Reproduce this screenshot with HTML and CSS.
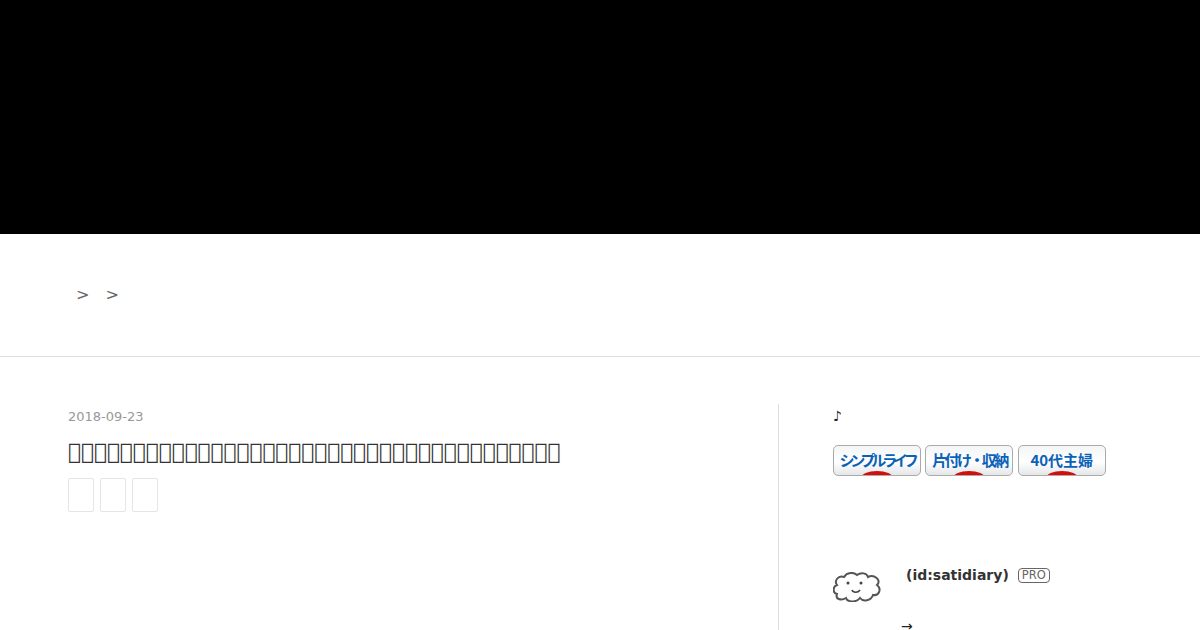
FILE: index.html
```html
<!DOCTYPE html>
<html lang="ja">
<head>
  <meta charset="UTF-8">
  <meta name="viewport" content="width=device-width, initial-scale=1.0">
  <title>2018-09-23</title>
  <link rel="stylesheet" href="styles.css">
</head>
<body>
  <header class="blog-header"></header>

  <nav class="breadcrumb">
    <span class="crumb-sep">&gt;</span>
    <span class="crumb-sep">&gt;</span>
  </nav>

  <div class="content">
    <main class="entry">
      <time class="entry-date">2018-09-23</time>
      <h1 class="entry-title">&#xE000;&#xE000;&#xE000;&#xE000;&#xE000;&#xE000;&#xE000;&#xE000;&#xE000;&#xE000;&#xE000;&#xE000;&#xE000;&#xE000;&#xE000;&#xE000;&#xE000;&#xE000;&#xE000;&#xE000;&#xE000;&#xE000;&#xE000;&#xE000;&#xE000;&#xE000;&#xE000;&#xE000;&#xE000;&#xE000;&#xE000;&#xE000;&#xE000;&#xE000;&#xE000;&#xE000;&#xE000;&#xE000;</h1>
      <div class="entry-tags">
        <a class="tag"></a>
        <a class="tag"></a>
        <a class="tag"></a>
      </div>
    </main>

    <aside class="sidebar">
      <p class="side-note">♪</p>
      <div class="banners">
        <a class="banner banner-simple">シンプルライフ</a>
        <a class="banner banner-storage">片付け・収納</a>
        <a class="banner banner-age">40代主婦</a>
      </div>
      <div class="profile">
        <svg class="avatar" width="48" height="30" viewBox="0 0 48 30">
          <path d="M4 13C1 9 5 3 11 5C14 0 21 0 24 3C28 0 34 1 35 5C41 2 49 8 44 13C49 17 46 24 40 23C38 29 30 30 27 26C23 31 14 30 13 26C8 29 2 27 4 22C-1 21 0 14 4 13Z" fill="#fff" stroke="#555" stroke-width="2"/>
          <circle cx="15" cy="11" r="1.5" fill="#444"/>
          <circle cx="28" cy="11" r="1.5" fill="#444"/>
          <path d="M19 18C20 21 25 21 27 18" fill="none" stroke="#444" stroke-width="1.6"/>
        </svg>
        <div class="profile-body">
          <div class="profile-name">
            <span class="profile-id">(id:satidiary)</span>
            <span class="pro-badge">PRO</span>
          </div>
          <p class="profile-link">→</p>
        </div>
      </div>
    </aside>
  </div>
</body>
</html>
```

FILE: styles.css
```css
html, body {
    height: 630px;
    overflow: hidden;
}
body {
    margin: 0;
    background-color: #fff;
    color: #333;
    font-family: "DejaVu Sans", sans-serif;
}
.blog-header {
    height: 234px;
    background-color: #000;
}
.breadcrumb {
    display: flex;
    gap: 16px;
    align-items: center;
    height: 122px;
    padding-left: 76px;
    border-bottom: 1px solid #ddd;
    color: #666;
    font-size: 16px;
    line-height: 20px;
}
.content {
    display: flex;
    padding: 47px 0 0 68px;
}
.entry {
    width: 710px;
    flex-shrink: 0;
}
.entry-date {
    display: block;
    color: #999;
    font-size: 13px;
    line-height: 20px;
    margin-top: 3px;
}
.entry-title {
    margin: 11px 0 0;
    color: #333;
    font-size: 21.6px;
    font-weight: normal;
    line-height: 28px;
    white-space: nowrap;
}
.entry-tags {
    display: flex;
    gap: 6px;
    margin-top: 12px;
}
.tag {
    display: block;
    width: 26px;
    height: 34px;
    box-sizing: border-box;
    border: 1px solid #e5e5e5;
    border-radius: 2px;
}
.sidebar {
    flex: 1;
    height: 240px;
    padding-left: 54px;
    border-left: 1px solid #ddd;
}
.side-note {
    margin: 0;
    color: #222;
    font-size: 14px;
    line-height: 24px;
}
.banners {
    display: flex;
    gap: 4.4px;
    margin-top: 17px;
}
.banner {
    position: relative;
    display: block;
    width: 88px;
    height: 31px;
    box-sizing: border-box;
    overflow: hidden;
    border: 1px solid #aaa;
    border-radius: 5px;
    background: linear-gradient(#f3f5f6, #fff 55%, #e4e6e8);
    color: #0a62b8;
    font-family: "Noto Sans CJK JP", sans-serif;
    font-size: 15px;
    font-weight: bold;
    line-height: 27px;
    text-align: center;
    white-space: nowrap;
}
.banner-simple {
    letter-spacing: -4.2px;
}
.banner-storage {
    letter-spacing: -2.6px;
}
.banner::after {
    content: "";
    position: absolute;
    left: 27px;
    bottom: -10px;
    width: 32px;
    height: 14px;
    border-radius: 50%;
    background-color: #d40d0d;
}
.profile {
    display: flex;
    margin-top: 88px;
}
.avatar {
    margin-top: 8px;
    flex-shrink: 0;
}
.profile-body {
    margin-left: 24px;
}
.profile-name {
    display: flex;
    align-items: center;
    gap: 9px;
    height: 22px;
}
.profile-id {
    color: #333;
    font-size: 14px;
    font-weight: bold;
    margin-left: 1px;
}
.pro-badge {
    padding: 0 3px;
    border: 1px solid #666;
    border-radius: 4px;
    color: #666;
    font-size: 11.5px;
    line-height: 13px;
}
.profile-link {
    margin: 30px 0 0 -4px;
    color: #222;
    font-size: 14px;
    line-height: 20px;
}
```
